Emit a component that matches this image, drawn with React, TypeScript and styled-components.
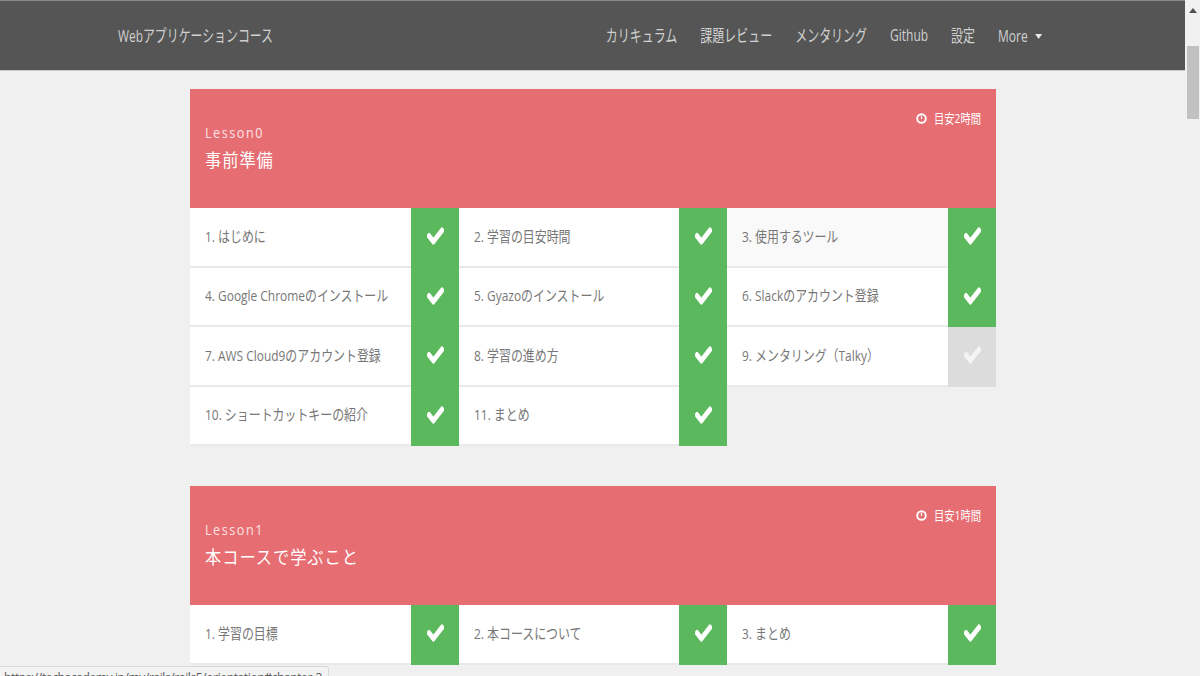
import React from 'react';
import styled, { createGlobalStyle } from 'styled-components';
import { FaCheck } from 'react-icons/fa';

const GlobalStyle = createGlobalStyle`
  html, body {
    margin: 0;
    padding: 0;
    height: 100%;
    overflow: hidden;
  }
  body {
    background: #f0f0f0;
    font-family: "Open Sans", "Noto Sans CJK JP", sans-serif;
  }
`;

const Page = styled.div`
  display: flex;
  height: 676px;
  overflow: hidden;
`;

const Main = styled.div`
  flex: 1;
  min-width: 0;
`;

const Navbar = styled.nav`
  height: 71px;
  box-sizing: border-box;
  background: #555;
  border-top: 1px solid #8a8a8a;
  border-bottom: 1px solid #ccc;
  display: flex;
  align-items: center;
  justify-content: space-between;
  padding: 0 143px 3px 118px;
`;

// the reference's type is narrow, so the text gets squeezed sideways
const Brand = styled.a`
  color: #d0d0d0;
  font-size: 17px;
  transform: scaleX(0.7);
  transform-origin: left center;
`;

const NavList = styled.div`
  display: flex;
  gap: 32.6px;
  transform: scaleX(0.705);
  transform-origin: right center;
`;

const NavItem = styled.a<{ $dropdown?: boolean }>`
  display: flex;
  align-items: center;
  gap: 11px;
  color: #d0d0d0;
  font-size: 17px;
  margin-top: ${props => (props.$dropdown ? '2px' : '0')};
`;

const Caret = styled.span`
  width: 0;
  height: 0;
  margin-top: 2px;
  border-left: 5px solid transparent;
  border-right: 5px solid transparent;
  border-top: 5px solid #e8e8e8;
`;

const Content = styled.div`
  width: 805.5px;
  margin: 18px 0 0 190px;
  display: flex;
  flex-direction: column;
  gap: 40px;
`;

const Header = styled.div`
  height: 119px;
  box-sizing: border-box;
  background: #e66d72;
  padding: 19px 15px 0;
  display: flex;
  justify-content: space-between;
  align-items: flex-start;
  color: #fff;
`;

const Titles = styled.div`
  display: flex;
  flex-direction: column;
  margin-top: 15px;
  transform: scaleX(0.9);
  transform-origin: left center;
`;

const LessonNo = styled.div`
  font-size: 14px;
  line-height: 20px;
  letter-spacing: 1.7px;
  color: #fbe3e4;
`;

const LessonTitle = styled.div`
  font-size: 18px;
  line-height: 34px;
  letter-spacing: 1.1px;
`;

const Estimate = styled.div`
  display: flex;
  align-items: center;
  gap: 7px;
`;

const EstimateText = styled.span`
  display: block;
  width: 47px;
  font-size: 13px;
  line-height: 20px;
  white-space: nowrap;
  transform: scaleX(0.79);
  transform-origin: left center;
`;

const Grid = styled.div`
  display: grid;
  grid-template-columns: repeat(3, minmax(0, 1fr));
`;

const Cell = styled.div<{ $hover?: boolean }>`
  height: 59.5px;
  box-sizing: border-box;
  display: flex;
  background: ${props => (props.$hover ? '#f9f9f9' : '#fff')};
  border-bottom: 2px solid #e9e9e9;
`;

const CellLabel = styled.div`
  flex: 1;
  min-width: 0;
  display: flex;
  align-items: center;
  padding: 0 0 3px 15px;
  color: #777;
  font-size: 15px;
  white-space: nowrap;
`;

const CellText = styled.span`
  transform: scaleX(0.795);
  transform-origin: left center;
`;

const Status = styled.div<{ $done: boolean }>`
  width: 48px;
  height: 59.5px;
  flex: none;
  padding: 0 0 3px 1px;
  box-sizing: border-box;
  display: flex;
  align-items: center;
  justify-content: center;
  color: ${props => (props.$done ? '#fff' : '#f4f4f4')};
  background: ${props => (props.$done ? '#5cb85c' : '#dcdcdc')};
`;

const CheckIcon = styled(FaCheck).attrs({ preserveAspectRatio: 'none' })`
  width: 17px;
  height: 22px;
  stroke-width: 24px;
`;

const Scrollbar = styled.div`
  width: 15px;
  flex: none;
  background: #f1f1f1;
  display: flex;
  flex-direction: column;
  align-items: center;
`;

const ScrollArrow = styled.span`
  width: 0;
  height: 0;
  margin-top: 8px;
  border-left: 4px solid transparent;
  border-right: 4px solid transparent;
  border-bottom: 5px solid #505050;
`;

const ScrollThumb = styled.div`
  width: 12px;
  height: 73px;
  margin-top: 33px;
  background: #c1c1c1;
`;

const StatusLink = styled.div`
  position: fixed;
  left: 0;
  bottom: -8px;
  width: 329px;
  height: 18px;
  box-sizing: border-box;
  padding: 4px 0 0 4px;
  background: #f3f3f3;
  border: 1px solid #d8d8d8;
  border-left: none;
  border-radius: 0 3px 0 0;
  color: #555;
  font-size: 12px;
  line-height: 14px;
  letter-spacing: -0.38px;
  white-space: nowrap;
  overflow: hidden;
`;

const ClockIcon = () => (
  <svg width="11" height="11" viewBox="0 0 11 11" fill="none" stroke="#fff">
    <circle cx="5.5" cy="5.5" r="4.3" strokeWidth="1.9" />
    <path d="M5.5 2.8V6" strokeWidth="1.2" />
  </svg>
);

type Lesson = {
  no: string;
  title: string;
  hours: string;
  items: { label: string; done: boolean; hover?: boolean }[];
};

const lessons: Lesson[] = [
  {
    no: 'Lesson0',
    title: '事前準備',
    hours: '目安2時間',
    items: [
      { label: '1. はじめに', done: true },
      { label: '2. 学習の目安時間', done: true },
      { label: '3. 使用するツール', done: true, hover: true },
      { label: '4. Google Chromeのインストール', done: true },
      { label: '5. Gyazoのインストール', done: true },
      { label: '6. Slackのアカウント登録', done: true },
      { label: '7. AWS Cloud9のアカウント登録', done: true },
      { label: '8. 学習の進め方', done: true },
      { label: '9. メンタリング（Talky）', done: false },
      { label: '10. ショートカットキーの紹介', done: true },
      { label: '11. まとめ', done: true },
    ],
  },
  {
    no: 'Lesson1',
    title: '本コースで学ぶこと',
    hours: '目安1時間',
    items: [
      { label: '1. 学習の目標', done: true },
      { label: '2. 本コースについて', done: true },
      { label: '3. まとめ', done: true },
    ],
  },
];

const navItems = ['カリキュラム', '課題レビュー', 'メンタリング', 'Github', '設定'];

const App: React.FC = () => (
  <Page>
    <GlobalStyle />
    <Main>
      <Navbar>
        <Brand>Webアプリケーションコース</Brand>
        <NavList>
          {navItems.map(item => (
            <NavItem key={item}>{item}</NavItem>
          ))}
          <NavItem $dropdown>
            More
            <Caret />
          </NavItem>
        </NavList>
      </Navbar>
      <Content>
        {lessons.map(lesson => (
          <section key={lesson.no}>
            <Header>
              <Titles>
                <LessonNo>{lesson.no}</LessonNo>
                <LessonTitle>{lesson.title}</LessonTitle>
              </Titles>
              <Estimate>
                <ClockIcon />
                <EstimateText>{lesson.hours}</EstimateText>
              </Estimate>
            </Header>
            <Grid>
              {lesson.items.map(item => (
                <Cell key={item.label} $hover={item.hover}>
                  <CellLabel>
                    <CellText>{item.label}</CellText>
                  </CellLabel>
                  <Status $done={item.done}>
                    <CheckIcon />
                  </Status>
                </Cell>
              ))}
            </Grid>
          </section>
        ))}
      </Content>
    </Main>
    <Scrollbar>
      <ScrollArrow />
      <ScrollThumb />
    </Scrollbar>
    <StatusLink>https://techacademy.jp/my/rails/rails5/orientation#chapter-3</StatusLink>
  </Page>
);

export default App;
